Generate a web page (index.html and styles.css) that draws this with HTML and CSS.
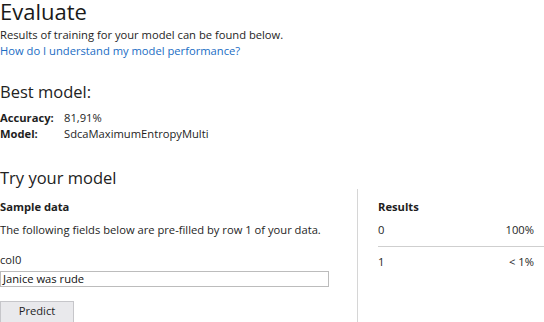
FILE: index.html
```html
<!DOCTYPE html>
<html>
<head>
<meta charset="utf-8">
<link rel="stylesheet" href="styles.css">
</head>
<body>
<div class="page">
  <h1 class="title">Evaluate</h1>
  <p class="intro">Results of training for your model can be found below.</p>
  <a class="link" href="#">How do I understand my model performance?</a>

  <h2 class="section">Best model:</h2>
  <div class="stats">
    <span class="key">Accuracy:</span><span class="val">81,91%</span>
    <span class="key">Model:</span><span class="val">SdcaMaximumEntropyMulti</span>
  </div>

  <h2 class="section try-title">Try your model</h2>
  <div class="try">
    <div class="sample">
      <div class="sub">Sample data</div>
      <p class="desc">The following fields below are pre-filled by row 1 of your data.</p>
      <label class="field-label">col0</label>
      <div class="input">Janice was rude</div>
      <button class="btn">Predict</button>
    </div>
    <div class="results">
      <div class="sub res-title">Results</div>
      <div class="row"><span>0</span><span>100%</span></div>
      <div class="row"><span>1</span><span>&lt; 1%</span></div>
    </div>
  </div>
</div>
</body>
</html>
```
FILE: styles.css
```css
html, body { margin: 0; padding: 0; background: #fff; }
body {
  font-family: "Open Sans", "Noto Sans", sans-serif;
  font-size: 11.2px;
  color: #1e1e1e;
  overflow: hidden;
  height: 322px;
}
.title {
  margin: 0;
  font-size: 22px;
  font-weight: 400;
  line-height: 22px;
  color: #1a1a1a;
}
.intro { margin: 6px 0 0; line-height: 14px; }
.link { display: block; margin-top: 1px; color: #1a6dc4; text-decoration: none; line-height: 15px; }
.section {
  margin: 24px 0 0;
  font-size: 16.5px;
  font-weight: 400;
  line-height: 20px;
  color: #222;
}
.stats {
  display: grid;
  grid-template-columns: 64px auto;
  margin-top: 8px;
  line-height: 16px;
}
.key { font-weight: 700; }
.try-title { margin-top: 26px; }
.try {
  display: grid;
  grid-template-columns: 357px 1fr;
  margin-top: 1px;
  height: 140px;
}
.sample { padding-top: 10px; }
.results { border-left: 1px solid #d6d6d6; padding: 10px 0 0 20px; }
.sub { font-weight: 700; line-height: 16px; }
.desc { margin: 7px 0 0; line-height: 16px; }
.field-label { display: block; margin-top: 14px; line-height: 16px; }
.input {
  width: 323px;
  height: 14px;
  border: 1px solid #bcbcbc;
  padding: 0 2px 0 2px;
  line-height: 14px;
  margin-top: 3px;
  color: #111;
}
.btn {
  display: block;
  margin-top: 14px;
  width: 74px;
  height: 24px;
  background: #e9e9ec;
  border: 1px solid #c6c6ca;
  font: inherit;
  line-height: 16px;
  color: #1e1e1e;
  padding: 1px 0 5px;
  text-align: center;
}
.row {
  display: flex;
  justify-content: space-between;
  line-height: 16px;
  padding: 7px 10px 8px 0;
}
.row + .row { border-top: 1px solid #cfcfcf; padding-top: 7px; }
```
